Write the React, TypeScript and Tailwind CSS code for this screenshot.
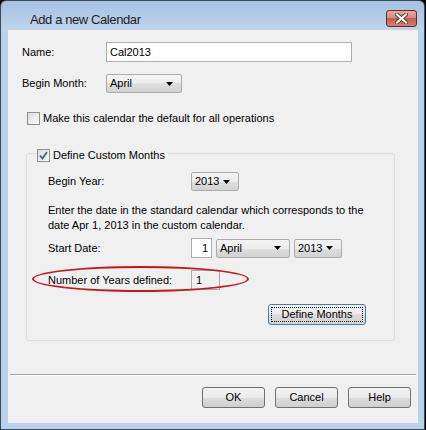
import React from 'react'

function Checkbox({ checked }: { checked?: boolean }) {
  return (
    <div className="w-[13px] h-[13px] border border-[#8e8f8f] bg-[linear-gradient(135deg,#dcdcdc,#fbfbfb)] flex items-center justify-center shrink-0">
      {checked && (
        <svg width="9" height="9" viewBox="0 0 9 9">
          <path d="M1 4.5 L3.5 7.5 L8 1" fill="none" stroke="#4a5f97" strokeWidth="1.8" />
        </svg>
      )}
    </div>
  )
}

function Dropdown({ value, width }: { value: string; width: string }) {
  return (
    <div className={`${width} h-[19px] border border-[#acacac] rounded-[2px] bg-[linear-gradient(#f4f4f4,#ececec_50%,#dfdfdf_50%,#d2d2d2)] flex items-center justify-between pl-[3px] pr-[8px]`}>
      <span>{value}</span>
      <svg width="7" height="4" viewBox="0 0 7 4">
        <polygon points="0,0 7,0 3.5,4" fill="#000" />
      </svg>
    </div>
  )
}

function Button({ label, focused }: { label: string; focused?: boolean }) {
  return (
    <div
      className={`h-[21px] rounded-[3px] border flex items-center justify-center bg-[linear-gradient(#f2f2f2,#ebebeb_50%,#dddddd_50%,#cfcfcf)] ${
        focused ? 'w-[98px] h-[19px] border-[#3c7fb1] p-[2px]' : 'w-[63px] border-[#707070]'
      }`}
    >
      {focused ? (
        <div className="w-full h-full border border-dotted border-black flex items-center justify-center">{label}</div>
      ) : (
        label
      )}
    </div>
  )
}

export default function App() {
  return (
    <div className="w-[426px] h-[430px] bg-black font-['Liberation_Sans',Arial,sans-serif] text-[11px] text-black">
      <div className="w-[425px] h-[430px] border border-[#3d4a57] rounded-t-[6px] flex flex-col bg-[linear-gradient(#a7c1e1,#bfd5ec_30px,#b9d1ea_31px)]">
        {/* Title bar */}
        <div className="h-[29px] flex items-start shrink-0">
          <div className="pl-[29px] pt-[9px] text-[13px] tracking-[-0.4px] text-[#1e1e1e]">Add a new Calendar</div>
          <div className="ml-auto mr-[7px] mt-[9px] w-[31px] h-[17px] rounded-[3px] border border-[#6e2a22] bg-[linear-gradient(#e4a99e,#d48a7d_50%,#c4604f_50%,#d0806f)] flex items-center justify-center">
            <svg width="13" height="11" viewBox="0 0 13 11">
              <path d="M2 1.5 L11 9.5 M11 1.5 L2 9.5" stroke="#5a302a" strokeWidth="4" strokeLinecap="square" />
              <path d="M2 1.5 L11 9.5 M11 1.5 L2 9.5" stroke="#ffffff" strokeWidth="2.2" strokeLinecap="square" />
            </svg>
          </div>
        </div>

        {/* Content */}
        <div className="ml-[7px] mr-[6px] mb-[6px] flex-1 bg-[#f0f0f0] flex flex-col">
          <div className="pl-[14px] pt-[12px] flex flex-col">
            <div className="h-[20px] flex items-center">
              <span className="w-[84px]">Name:</span>
              <div className="w-[246px] h-[20px] border border-[#abadb3] bg-white flex items-center pl-[3px]">Cal2013</div>
            </div>
            <div className="h-[19px] mt-[12px] flex items-center">
              <span className="w-[84px]">Begin Month:</span>
              <Dropdown value="April" width="w-[76px]" />
            </div>
            <div className="h-[13px] mt-[19px] ml-[5px] flex items-center gap-[3px]">
              <Checkbox />
              <span>Make this calendar the default for all operations</span>
            </div>

            {/* Group box */}
            <div className="relative mt-[28px] ml-[4px] w-[369px] border border-[#d5dfe5] rounded-[3px] pl-[21px] pt-[18px] pb-[15px] pr-[28px] flex flex-col">
              <div className="absolute -top-[5px] left-[10px] h-[13px] flex items-center gap-[3px] bg-[#f0f0f0] pr-[3px]">
                <Checkbox checked />
                <span>Define Custom Months</span>
              </div>
              <div className="h-[19px] flex items-center">
                <span className="w-[143px]">Begin Year:</span>
                <Dropdown value="2013" width="w-[48px]" />
              </div>
              <p className="mt-[12px] leading-[15px]">
                Enter the date in the standard calendar which corresponds to the
                <br />
                date Apr 1, 2013 in the custom calendar.
              </p>
              <div className="h-[20px] mt-[5px] flex items-center">
                <span className="w-[143px]">Start Date:</span>
                <div className="w-[21px] h-[20px] border border-[#abadb3] bg-white flex items-center justify-end pr-[3px]">1</div>
                <div className="ml-[4px]">
                  <Dropdown value="April" width="w-[74px]" />
                </div>
                <div className="ml-[4px]">
                  <Dropdown value="2013" width="w-[48px]" />
                </div>
              </div>
              <div className="relative h-[20px] mt-[12px] flex items-center">
                <span className="w-[143px]">Number of Years defined:</span>
                <div className="w-[29px] h-[20px] border border-[#abadb3] bg-[#f0f0f0] flex items-center pl-[4px]">1</div>
                <div className="absolute -left-[16px] -top-[4px] w-[217px] h-[26px] rounded-[50%] border-2 border-[#c4161c]" />
              </div>
              <div className="mt-[14px] flex justify-end">
                <Button label="Define Months" focused />
              </div>
            </div>
          </div>

          <div className="mt-[33px] mx-[2px] h-[2px] border-t border-[#a0a0a0] border-b border-b-white" />

          <div className="mt-[11px] pr-[7px] flex justify-end gap-[10px]">
            <Button label="OK" />
            <Button label="Cancel" />
            <Button label="Help" />
          </div>
        </div>
      </div>
    </div>
  )
}
